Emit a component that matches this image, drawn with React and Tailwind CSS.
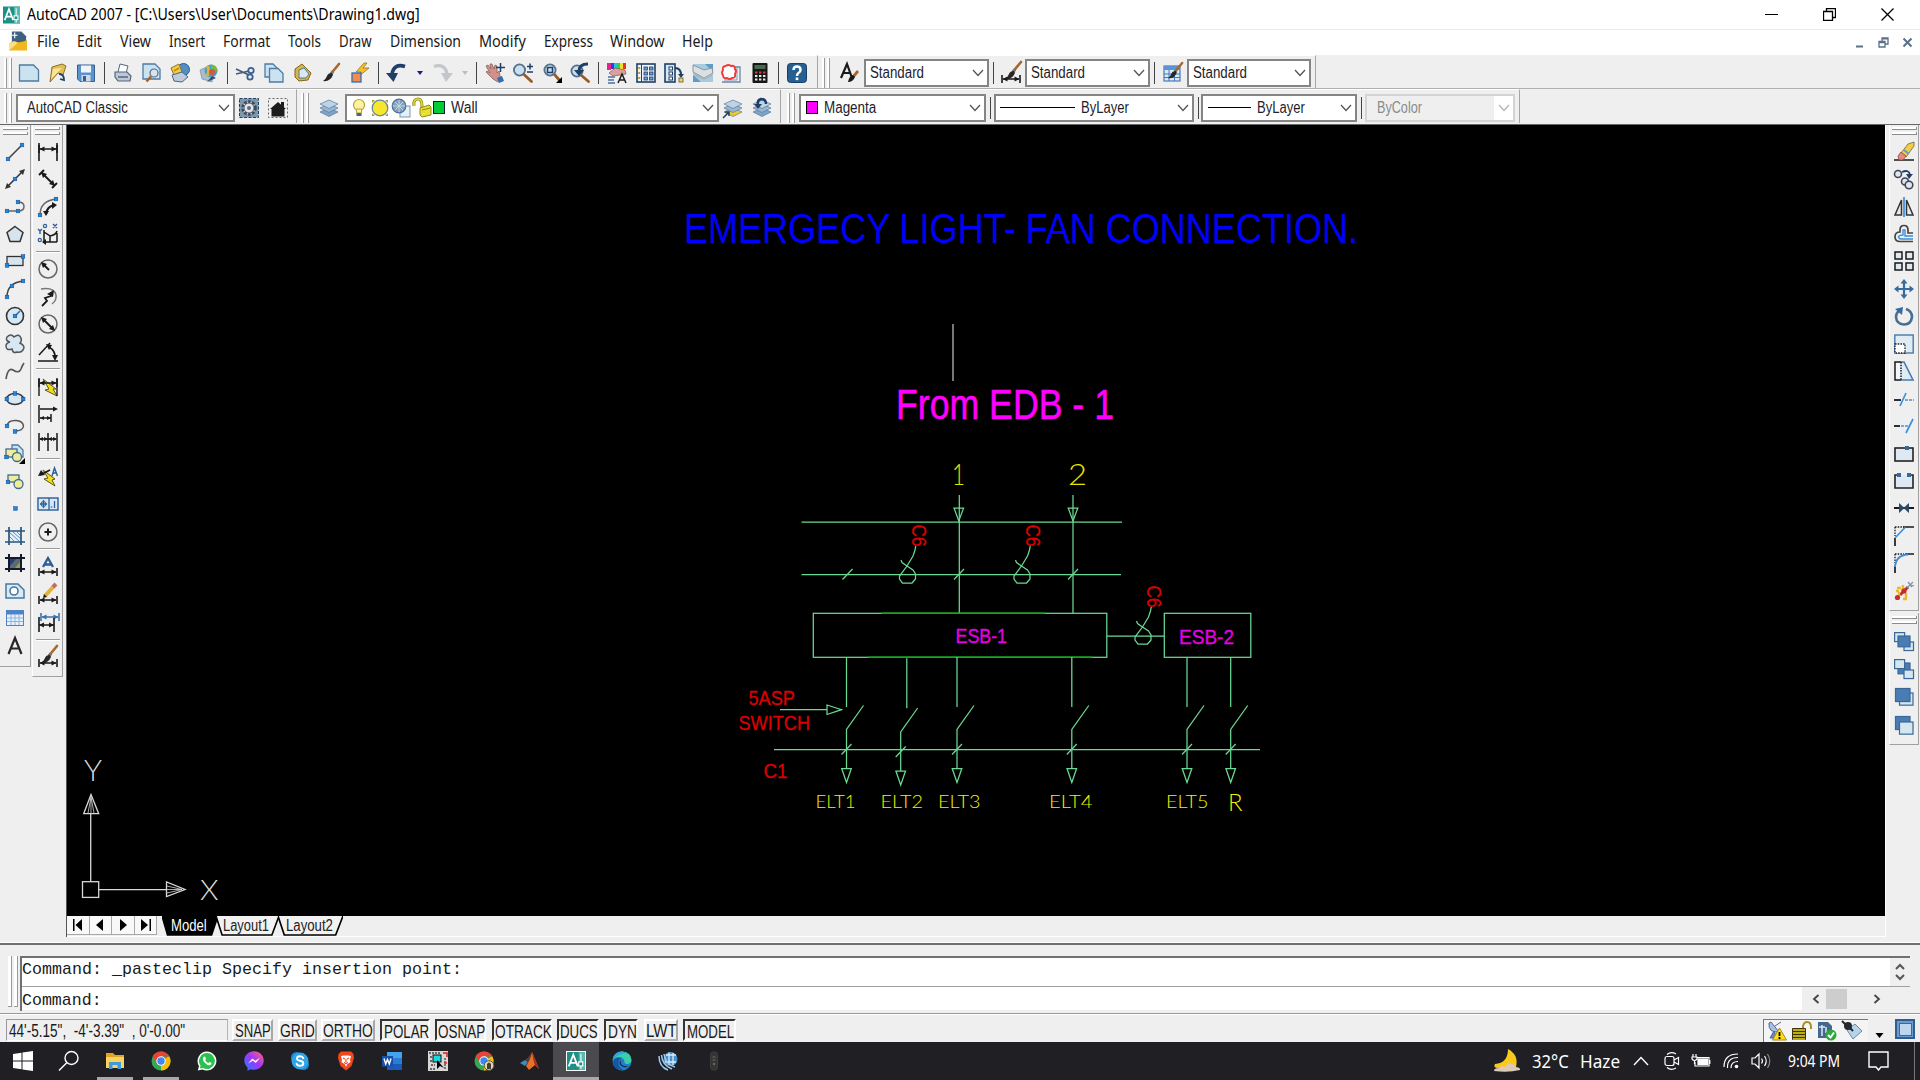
import React, { useLayoutEffect, useRef, useState } from "react";
import { FaWhatsapp } from "react-icons/fa";

/* Text squeezed or stretched horizontally to the width of its box. */
function Fit({ className = "", children }) {
  const box = useRef(null);
  const inner = useRef(null);
  const [k, setK] = useState(1);
  useLayoutEffect(() => {
    const w = inner.current.offsetWidth;
    if (w) setK(box.current.clientWidth / w);
  }, [children]);
  return (
    <span ref={box} className={"block shrink-0 whitespace-nowrap " + className}>
      <span ref={inner} className="inline-block origin-left whitespace-pre" style={{ transform: `scaleX(${k})` }}>
        {children}
      </span>
    </span>
  );
}

const Ico = ({ children, className = "" }) => (
  <svg viewBox="0 0 20 20" className={"block h-5 w-5 shrink-0 overflow-visible " + className} fill="none">
    {children}
  </svg>
);

const NAVY = "#1f3f66";
const BLUE = "#2f6fb5";
const K = "#1a1a1a";
const Dot = ({ x, y }) => <rect x={x - 1.8} y={y - 1.8} width="3.6" height="3.6" fill="#1f86e0" stroke="#0f4f94" strokeWidth=".5" />;
const Brush = ({ dx = 0, dy = 0 }) => (
  <g transform={`translate(${dx} ${dy})`}>
    <path d="M18 1 L10.5 10" stroke="#a8672f" strokeWidth="2.6" strokeLinecap="round" />
    <path d="M12 8.500 L10 11" stroke="#777" strokeWidth="3" />
    <path d="M10.800 10 Q7 10 6 13 Q5 16 2 18 Q9 19 12 12 Z" fill="#262626" />
  </g>
);
const Lens = ({ x = 8, y = 7, r = 5.6 }) => (
  <g>
    <path d={`M${x + r * 0.75} ${y + r * 0.75} L18.5 18.5`} stroke="#9a5a22" strokeWidth="2.8" strokeLinecap="round" />
    <circle cx={x} cy={y} r={r} fill="#c9dfee" stroke="#54708c" strokeWidth="1.8" />
  </g>
);
const Sheet = ({ x = 1, y = 2, w = 15, h = 16 }) => (
  <path d={`M${x} ${y} h${w - 5} l5 5 v${h - 5} h${-w} Z`} fill="#cbe2f1" stroke="#4d7ba3" strokeWidth="1.3" />
);
const Layers = ({ last = "#7fa3c8" }) => (
  <g stroke="#58789c" strokeWidth=".7">
    <path d="M1 14 L10 10 L19 14 L10 18.500 Z" fill={last} />
    <path d="M1 10 L10 6 L19 10 L10 14.500 Z" fill="#97b7d3" />
    <path d="M1 6 L10 2 L19 6 L10 10.500 Z" fill="#bdd3e6" />
  </g>
);
const Dim = ({ y = 16, c = K }) => (
  <g stroke={c} fill={c}>
    <path d={`M1 ${y - 4} V${y + 4} M19 ${y - 4} V${y + 4} M2 ${y} H18`} strokeWidth="1.6" />
    <path d={`M1.5 ${y} l5 -2.6 v5.2 Z M18.5 ${y} l-5 -2.6 v5.2 Z`} stroke="none" />
  </g>
);

const i = {
  newf: <Ico><Sheet x={0.5} y={2} w={19} h={16} /></Ico>,
  open: <Ico><path d="M4 4 L14 1 L18 3 L15 12 L10 10 L2 19 Z" fill="#e0bf55" stroke="#8c7026" /><path d="M5 6 L14 5 L3 16 Z" fill="#f7e59c" /><path d="M11 11 q5 0 5 6 l-4 -1" stroke={NAVY} strokeWidth="1.800" /></Ico>,
  save: <Ico><path d="M1.500 2 H18.500 V18.500 H4 L1.500 16 Z" fill="#5c93cc" stroke="#335f94" /><rect x="5" y="2.500" width="10" height="7" fill="#f0f4f8" /><rect x="5.500" y="12" width="9" height="6.500" fill="#d0dae4" /><rect x="7" y="13" width="3" height="5" fill="#335f94" /></Ico>,
  print: <Ico><path d="M5 9 L7 1 L15 3 L13 10" fill="#fff" stroke="#55657c" /><path d="M2 9 L14 9 L18 13 L17 18 L5 18 L2 14 Z" fill="#bcc8da" stroke="#55657c" strokeWidth="1.200" /><path d="M5 14 h10" stroke="#55657c" strokeWidth="1.500" /></Ico>,
  preview: <Ico><Sheet x={1} y={1} w={17} h={15} /><circle cx="12" cy="10" r="4" fill="#cfe6f5" stroke="#667" strokeWidth="1.200" /><path d="M9 13.500 L4.500 18.500" stroke="#a8602a" strokeWidth="2.600" /></Ico>,
  publish: <Ico><circle cx="13.500" cy="6.500" r="6" fill="#4f8fc6" stroke="#2c5a86" /><path d="M1 5 L9 1 L12 9 L4 12 Z" fill="#f1cf45" stroke="#8c7026" /><path d="M2 12 L12 9 L18 14 L12 19 L4 18 Z" fill="#becbdd" stroke="#55657c" /><path d="M4 8 L9 5" stroke="#c48a14" strokeWidth="2" /></Ico>,
  dwf: <Ico><path d="M1 7 L10 3 L14 8 L13 19 L3 16 Z" fill="#a8bdd2" stroke="#697f96" strokeWidth=".6" /><circle cx="12" cy="8" r="6.500" fill="#39a5c9" /><path d="M12 1.500 A6.500 6.500 0 0 1 18.500 8 L12 8 Z" fill="#74bb3d" /><path d="M8 3 Q11 7 8 13" stroke="#d9b53d" strokeWidth="3" /><circle cx="13" cy="9" r="3" fill="#d9534a" /><path d="M8 19 l9 -4 -4 -2 Z" fill="#36506d" /></Ico>,
  cut: <Ico><path d="M1 6 L14 12 M1 11 L14 8" stroke="#465b7a" strokeWidth="1.700" /><circle cx="16" cy="7.500" r="2.700" stroke="#3d5f92" strokeWidth="1.800" /><circle cx="15" cy="14" r="2.700" stroke="#3d5f92" strokeWidth="1.800" /></Ico>,
  copy: <Ico><Sheet x={1} y={1} w={13} h={13} /><Sheet x={5.500} y={5.500} w={13.500} h={13.500} /></Ico>,
  paste: <Ico><path d="M2 6 L9 1 L18 10 L15 17 L6 18 L2 14 Z" fill="#d9b544" stroke="#80661f" /><path d="M6 7 L11 5 L16 11 L13 15 L6 15 Z" fill="#d8e9f5" stroke="#4d7ba3" /></Ico>,
  brush: <Ico><Brush /></Ico>,
  match: <Ico><path d="M14 0 L6 9 H11 L8 14 L19 5 H13 L17 0 Z" fill="#f5c22c" stroke="#97702c" strokeWidth=".8" /><rect x="2" y="10" width="9" height="9" fill="#f58a4e" stroke={BLUE} strokeWidth="1.300" /></Ico>,
  undo: <Ico><path d="M19 3.500 Q8 0 6 11" stroke={NAVY} strokeWidth="3.600" /><path d="M0 10 L7.500 19 L12 10 Z" fill={NAVY} /></Ico>,
  redo: <Ico><path d="M1 3.500 Q12 0 14 11" stroke="#c3c6ca" strokeWidth="3.400" /><path d="M8 10 L13 19 L20 10 Z" fill="#c3c6ca" /></Ico>,
  pan: <Ico><path d="M1 3 L3 2 L6 6 L5 1 L7 1 L9 6 L10 2 L12 3 L12 10 L14 8 L15 13 L17 17 L13 19 L8 16 L1 9 L2 8 L5 10 Z" fill="#cf918b" stroke="#8d5f5c" strokeWidth=".8" /><path d="M12 15 l5 -2 2 5 -5 2 Z" fill={BLUE} /><path d="M15.500 0 V9 M11 4.500 H20" stroke={NAVY} strokeWidth="1.500" /></Ico>,
  zoomrt: <Ico><Lens x={6.500} /><path d="M14 3.500 h6 M17 .5 v6 M14 9 h6" stroke={NAVY} strokeWidth="1.500" /></Ico>,
  zoomwin: <Ico><Lens /><rect x="5.500" y="4.500" width="5" height="5" stroke={NAVY} strokeWidth="1.500" /><path d="M20 14 v6 h-6 Z" fill="#000" /></Ico>,
  zoomprev: <Ico><Lens x={7} y={8} /><path d="M18 1 Q9 1 9 8" stroke={NAVY} strokeWidth="3" /><path d="M4 7 h10 l-5 6 Z" fill={NAVY} /></Ico>,
  props: <Ico><rect x="0" y="0" width="4" height="7" fill="#e2258b" /><rect x="4" y="0" width="3" height="6" fill="#3a37e0" /><rect x="7" y="0" width="3" height="6" fill="#24c5d8" /><rect x="10" y="0" width="3" height="6" fill="#3bce3b" /><rect x="13" y="0" width="3" height="6" fill="#f0e22c" /><rect x="16" y="0" width="3" height="6" fill="#e63329" /><path d="M2 10 L8 5 L18 7 L19 11 L13 12 L6 13 Z" fill="#d9a199" stroke="#855" strokeWidth=".7" /><path d="M1 14 h7 M1 17 h6 M1 20 h7" stroke="#4c6f9c" strokeWidth="1.400" /><path d="M11 20 L15 11 L19 20 M13 17 h5" stroke={K} strokeWidth="1.500" /></Ico>,
  dcenter: <Ico><rect x="1" y="1" width="18" height="18" fill="#eef4fa" stroke={NAVY} strokeWidth="1.600" /><path d="M5.500 1 V19" stroke={NAVY} />{[4, 9, 14].map((y) => <g key={y}><rect x="2.200" y={y} width="2" height="2" fill="#c99a22" /><rect x="8" y={y} width="3.500" height="3" fill="#6e9ccc" stroke={NAVY} strokeWidth=".8" /><rect x="13.500" y={y} width="3.500" height="3" fill="#6e9ccc" stroke={NAVY} strokeWidth=".8" /></g>)}</Ico>,
  palettes: <Ico><rect x="1" y="1" width="10" height="18" fill="#d9e7f3" stroke={NAVY} strokeWidth="1.600" />{[4, 9, 14].map((y) => <rect key={y} x="5" y={y} width="3.500" height="3" fill="#fff" stroke={NAVY} />)}<path d="M11 5 Q17 5 17 12" stroke={NAVY} strokeWidth="2" /><path d="M14 11 h6 l-3 4 Z" fill={NAVY} /><rect x="15" y="15" width="4" height="4" fill="#f3d44b" stroke="#775" /></Ico>,
  sheetset: <Ico><rect x="0" y="1" width="20" height="18" fill="#a9cbe0" /><path d="M12 1 H20 V9 Z M0 12 L8 19 H0 Z" fill="#5f9cc4" /><path d="M0 2 L11 7 L19 5 L20 10 L11 15 L0 9 Z" fill="#dbe0e2" stroke="#8697a3" /><path d="M2 12 L11 16 L19 12" stroke="#a9b8c0" strokeWidth="2" /></Ico>,
  markup: <Ico><path d="M4 4 H19 V19 H1" stroke="#6f87a6" strokeWidth="1.300" /><path d="M3 17 h13 v-13" stroke="#8299b6" /><path d="M5 3 q-4 0 -3 4 q-2 3 0 5 q0 4 4 3 q3 2 5 0 q4 0 3 -4 q2 -3 0 -5 q0 -4 -4 -3 q-3 -2 -5 0" fill="#fff" stroke="#ee3a3a" strokeWidth="1.900" /></Ico>,
  calc: <Ico><rect x="2.500" y="0" width="15" height="20" rx="1" fill="#171717" /><rect x="4.500" y="2" width="11" height="4" fill="#456a4d" />{[8.5, 12, 15.5].map((y) => [5, 9, 13].map((x) => <rect key={x + "-" + y} x={x} y={y} width="2.400" height="2" fill={y === 8.5 ? "#e33b3b" : "#e8e8e8"} />))}</Ico>,
  help: <Ico><rect x=".5" y=".5" width="19" height="19" rx="3" fill="#276090" stroke="#163f6b" /><path d="M6.500 7 Q6.500 3.500 10 3.500 Q13.500 3.500 13.500 6.800 Q13.500 9 11.500 10 Q10 11 10 13" stroke="#fff" strokeWidth="2.500" /><rect x="8.700" y="14.500" width="2.600" height="2.600" fill="#fff" /></Ico>,
  tstyle: <Ico><path d="M2 15 L8 1 L13 15 M4 10 H11" stroke={K} strokeWidth="2.200" /><path d="M19 8 L14 14" stroke="#a8672f" strokeWidth="2.800" /><path d="M14 12 Q10 13 9 19 Q14 19 16 14 Z" fill={K} /></Ico>,
  dstyle: <Ico><g transform="translate(2 -2)"><Brush /></g><Dim y={16} /></Ico>,
  tabstyle: <Ico><rect x="1" y="3" width="16" height="15" fill="#dbe9f7" stroke="#4679b9" strokeWidth="1.200" /><rect x="1" y="3" width="16" height="4" fill="#5a93d6" /><path d="M1 11 h16 M1 14.500 h16 M6 7 v11 M11.500 7 v11" stroke="#4679b9" /><g transform="translate(3 -1) scale(.9)"><Brush /></g></Ico>,
  gear: <Ico><rect x=".5" y=".5" width="19" height="19" fill="#7d97ad" stroke={NAVY} strokeDasharray="3 1.500" /><circle cx="10" cy="10" r="6.300" fill="#e6e9ec" stroke="#3c4c5c" strokeWidth="3" strokeDasharray="2.600 1.400" /><circle cx="10" cy="10" r="5" fill="#e3e7eb" stroke="#556" /><circle cx="10" cy="10" r="2" fill="#5a6c80" /></Ico>,
  home: <Ico><rect x=".5" y=".5" width="19" height="19" stroke="#666" strokeDasharray="2 2" /><path d="M2 11 L10 4 L18 11 H16.500 V18.500 H3.500 V11 Z M13 4 h3 v5 h-3 Z" fill="#1c1c1c" /></Ico>,
  layers: <Ico><Layers /></Ico>,
  bulb: <Ico><circle cx="10" cy="7" r="5.500" fill="#fbf3a2" stroke="#b9a13a" strokeWidth="1.200" /><path d="M7.500 11 h5 v4 h-5 Z" fill="#fbf3a2" stroke="#b9a13a" /><path d="M7.500 15 h5 v3 h-5 Z" fill="#4f6480" /></Ico>,
  sun: <Ico><path d="M2 2 H5 L2 5 Z M18 2 V5 L15 2 Z M2 18 V15 L5 18 Z M18 18 H15 L18 15 Z" fill="#a5a032" /><circle cx="10" cy="10" r="7.800" fill="#f6e62c" stroke="#6f86a0" strokeWidth="1.300" /></Ico>,
  freeze: <Ico><rect x="9" y="8" width="10" height="11" fill="#e6eef6" stroke="#7a96b6" /><circle cx="8" cy="8" r="6.800" fill="#7fa1bd" stroke="#4d7399" strokeWidth="1.200" /><path d="M8 2 V14 M2 8 H14 M4 4 L12 12 M12 4 L4 12" stroke="#c9d8e3" /></Ico>,
  lock: <Ico><path d="M2 8 Q1 1 6 1 Q10 1 10 8 V10" stroke="#8f8a18" strokeWidth="3" /><path d="M2 8 Q1 1 6 1 Q10 1 10 8 V10" stroke="#e6dc3b" strokeWidth="1.400" /><path d="M8 10 L17 7 L19 9 V17 L10 19 L8 17 Z" fill="#e9df35" stroke="#8f8a18" /><path d="M10 12 L18 10" stroke="#8f8a18" /></Ico>,
  laymake: <Ico><Layers last="#eccb2c" /><path d="M0 20 L6 14 M2 14 h4 v4" stroke={NAVY} strokeWidth="1.500" /></Ico>,
  layprev: <Ico><Layers /><path d="M14 6 Q14 1 9 1 Q5 2 6 7" stroke={NAVY} strokeWidth="2.500" /><path d="M2 6 h8 l-4 5 Z" fill={NAVY} /></Ico>,
};

const draw = [
  <Ico><path d="M3 17 L17 3" stroke="#444" strokeWidth="1.600" /><Dot x={3} y={17} /><Dot x={17} y={3} /></Ico>,
  <Ico><path d="M2 18 L18 2" stroke="#333" strokeWidth="1.600" /><path d="M20 0 l-6 2 4 4 Z M0 20 l6 -2 -4 -4 Z" fill="#333" /><Dot x={10} y={10} /></Ico>,
  <Ico><path d="M2 14 H13 M13 5 Q19 5 19 9.500 Q19 14 13 14" stroke="#666" strokeWidth="1.500" /><Dot x={2} y={14} /><Dot x={13} y={14} /><Dot x={13} y={5} /></Ico>,
  <Ico><path d="M10 2.500 L18 8.500 L15 17.500 H5 L2 8.500 Z" fill="#d7e4ed" stroke="#333" strokeWidth="1.500" /></Ico>,
  <Ico><rect x="2" y="5.500" width="16" height="9" fill="#d7e4ed" stroke="#333" strokeWidth="1.300" /><Dot x={2} y={14.5} /><Dot x={18} y={5.5} /></Ico>,
  <Ico><path d="M2 18 Q2 4 18 2" stroke="#444" strokeWidth="1.500" /><Dot x={2} y={18} /><Dot x={7} y={7} /><Dot x={18} y={2} /></Ico>,
  <Ico><circle cx="10" cy="10" r="8.500" fill="#d7e8f4" stroke="#333" strokeWidth="1.600" /><path d="M10 10 L15 5" stroke={BLUE} strokeWidth="1.600" /><Dot x={10} y={10} /></Ico>,
  <Ico><path d="M5 8 Q0 7 2 3 Q6 -1 9 3 Q14 -1 16 4 Q17 7 15 9 Q21 12 18 16 Q16 19 12 18 Q8 20 7 15 Q1 17 1 12 Q1 9 5 8" fill="#d7e8f4" stroke="#555" strokeWidth="1.500" /></Ico>,
  <Ico><path d="M1 18 Q3 6 8 9 Q14 13 16 8 Q17 5 19 2" stroke="#555" strokeWidth="1.600" /></Ico>,
  <Ico><ellipse cx="10" cy="10" rx="8.500" ry="5.500" fill="#d7e8f4" stroke="#333" strokeWidth="1.500" /><Dot x={1.8} y={10} /><Dot x={18.2} y={10} /><Dot x={10} y={4.5} /></Ico>,
  <Ico><path d="M2 10 Q3 4 11 4.500 Q18 5 18.500 10 Q18 15 10 15" stroke="#555" strokeWidth="1.500" /><Dot x={2} y={10} /><Dot x={10} y={15.5} /></Ico>,
  <Ico><Sheet x={7} y={1} w={11} h={12} /><rect x="1" y="5" width="11" height="8" fill="#f1ec9c" stroke="#3f6b8d" strokeWidth="1.300" /><circle cx="12" cy="13" r="4.500" fill="#f1ec9c" stroke="#3f6b8d" strokeWidth="1.300" /><Dot x={1.5} y={13} /><path d="M20 14 v6 h-6 Z" fill="#000" /></Ico>,
  <Ico><rect x="3" y="4" width="11" height="7" fill="#f1ec9c" stroke="#3f6b8d" strokeWidth="1.300" /><circle cx="13.500" cy="13" r="4.500" fill="#f1ec9c" stroke="#3f6b8d" strokeWidth="1.300" /><Dot x={3} y={11} /></Ico>,
  <Ico><Dot x={10.5} y={10.5} /></Ico>,
  <Ico><path d="M4 6 H16 V15 H4 Z" fill="#e7f1fa" /><path d="M4 6 L14 15 M8 6 L16 13 M12 6 L16 10 M4 10 L9 15" stroke="#5d90c0" /><path d="M4 1 V19 M16 1 V19 M0 5 H20 M0 16 H20" stroke="#28567f" strokeWidth="1.700" /></Ico>,
  <Ico><path d="M4 5 H16 V16 H4 Z" fill="#5d6a70" /><path d="M4 5 H12 L4 14 Z" fill="#27406f" /><path d="M16 8 V16 H9 Z" fill="#9a9860" /><path d="M4 1 V19 M16 1 V19 M0 5 H20 M0 16 H20" stroke="#111b2b" strokeWidth="2" /></Ico>,
  <Ico><path d="M1 3 H13 L19 9 V17 H1 Z" fill="#d9eaf5" stroke="#4679a3" strokeWidth="1.500" /><circle cx="9" cy="10" r="4" fill="#fff" stroke="#4679a3" strokeWidth="1.600" /></Ico>,
  <Ico><rect x="1.500" y="2.500" width="17" height="15" fill="#e8f1fa" stroke="#4f83c4" /><rect x="1.500" y="2.500" width="17" height="4" fill="#4f83c4" /><path d="M2 10 h16 M2 13.500 h16 M6 6 v11 M10 6 v11 M14 6 v11" stroke="#8db3de" /></Ico>,
  <Ico><path d="M3.500 18 L10 2 L16.500 18 M6 12.500 H14" stroke="#262626" strokeWidth="2.200" /></Ico>,
];

const Sep = "sep";
const dims = [
  <Ico><Dim y={7} /><path d="M1 1 V19 M19 1 V19" stroke={K} strokeWidth="1.600" /></Ico>,
  <Ico><path d="M4 4 L16 16 M1 6 L6 1 M14 19 L19 14" stroke={K} strokeWidth="1.900" /><path d="M3 3 l6 2 -4 4 Z M17 17 l-6 -2 4 -4 Z" fill={K} /></Ico>,
  <Ico><path d="M2 18 Q2 4 18 2" stroke="#666" strokeWidth="1.400" /><path d="M8 17 Q9 9 17 8" stroke={K} strokeWidth="2.200" /><path d="M5 14 h6 l-3 5 Z M14 5 l5 3 -5 4 Z" fill={K} /><Dot x={2} y={18} /><Dot x={18} y={2} /></Ico>,
  <Ico><path d="M6 6 V18 H19 M6 8 L12 12 V18 M12 12 Q18 11 19 7 M19 9 V18" stroke={K} strokeWidth="1.500" /><path d="M4 18 l4 -3 v6 Z" fill={K} /><path d="M0 5 l2 2 2 -2 M2 7 v3 M15 0 l4 4 M19 0 l-4 4" stroke="#2b5d98" strokeWidth="1.400" /><circle cx="7" cy="2" r="1.600" stroke="#2b5d98" strokeWidth="1.200" /><circle cx="1.800" cy="16" r="1.600" stroke="#2b5d98" strokeWidth="1.200" /></Ico>,
  Sep,
  <Ico><circle cx="10" cy="10" r="9" stroke="#666" strokeWidth="1.500" /><path d="M11 11 L5 5" stroke={K} strokeWidth="2" /><path d="M3 3 l6 2 -4 4 Z" fill={K} /></Ico>,
  <Ico><path d="M3 2 Q16 0 18 8 Q19 13 14 17" stroke="#777" strokeWidth="1.500" /><path d="M4 19 L9 14 L7 11 L13 9 L12 6" stroke={K} strokeWidth="1.800" /><path d="M16 3 l-1 7 -6 -3 Z" fill={K} /></Ico>,
  <Ico><circle cx="10" cy="10" r="9" stroke="#666" strokeWidth="1.500" /><path d="M5 5 L15 15" stroke={K} strokeWidth="2" /><path d="M3 3 l6 2 -4 4 Z M17 17 l-6 -2 4 -4 Z" fill={K} /></Ico>,
  <Ico><path d="M0 19 H20 M1 13 L12 1" stroke={K} strokeWidth="1.500" /><path d="M11 5 Q18 9 17 17" stroke={K} strokeWidth="1.600" /><path d="M8 2 l6 1 -3 5 Z M14 13 h6 l-3 6 Z" fill={K} /></Ico>,
  Sep,
  <Ico><path d="M5 2 L18 12 L15 12 L19 19 L7 13 L11 12 Z" fill="#f0dc1f" stroke="#5c5714" strokeWidth="1" /><Dim y={6} /><path d="M1 1 V19 M19 1 V19" stroke={K} strokeWidth="1.400" /></Ico>,
  <Ico><path d="M1 1 V19 M2 5 H18 M2 14 H13 M13 10 V18" stroke={K} strokeWidth="1.500" /><path d="M20 5 l-5 -2.500 v5 Z M2 14 l4 -2 v4 Z M13 14 l-4 -2 v4 Z" fill={K} /></Ico>,
  <Ico><path d="M1 1 V19 M10 1 V19 M19 1 V19 M2 7 H18" stroke={K} strokeWidth="1.500" /><path d="M1 7 l4 -2 v4 Z M10 7 l-4 -2 v4 Z M10 7 l4 -2 v4 Z M19 7 l-4 -2 v4 Z" fill={K} /></Ico>,
  Sep,
  <Ico><path d="M5 3 L17 12 L14 13 L17 19 L6 12 L10 11 Z" fill="#f0dc1f" stroke="#5c5714" strokeWidth="1" /><path d="M2 8 L12 3" stroke={K} strokeWidth="1.800" /><path d="M0 9 l3 -6 4 5 Z" fill={K} /><path d="M14 9 L16.500 1 L19.500 9 M15 6 h4" stroke="#2b5d98" strokeWidth="1.400" /></Ico>,
  <Ico><rect x="0" y="4" width="20" height="12" fill="#d7e8f4" stroke="#2b5d98" strokeWidth="1.400" /><path d="M11 4 V16 M2 10 h7 M5.500 6 v8 M16.500 7 v7" stroke="#2b5d98" strokeWidth="1.300" /><circle cx="5.500" cy="10" r="2.500" stroke="#2b5d98" /><circle cx="13.500" cy="13" r=".8" fill="#2b5d98" /></Ico>,
  <Ico><circle cx="10" cy="10" r="9" stroke="#666" strokeWidth="1.500" /><path d="M6.500 10 H13.500 M10 6.500 V13.500" stroke={K} strokeWidth="2" /></Ico>,
  Sep,
  <Ico><path d="M5 10 L10 1 L15 10 M6.500 7.500 H13.500" stroke="#2b5d98" strokeWidth="2.300" /><Dim y={15} /></Ico>,
  <Ico><Dim y={16} /><path d="M7 12 L16 2" stroke="#e2b13a" strokeWidth="4" /><path d="M15 3 L18 0" stroke="#c46a6a" strokeWidth="4" /><path d="M5 14 l1 -4 3 3 Z" fill={K} /></Ico>,
  <Ico><g transform="translate(2 0)"><Dim y={5} c="#3a72ad" /></g><path d="M1 5 V20 M16 6 V20 M1 13 H16" stroke={K} strokeWidth="1.600" /><path d="M1 13 l5 -2.600 v5.200 Z M16 13 l-5 -2.600 v5.200 Z" fill={K} /></Ico>,
  Sep,
  <Ico><g transform="translate(1 -2)"><Brush /></g><Dim y={16} /></Ico>,
];

const SQ = ({ x, y, w = 7, h = 7, f = "#dce9f3" }) => <rect x={x} y={y} width={w} height={h} fill={f} stroke={K} strokeWidth="1.500" />;
const modify = [
  <Ico><path d="M0 18 H20" stroke={K} strokeWidth="1.500" /><path d="M7 11 L14 2 L20 0 V4 L12 15 Z" fill="#efce4e" stroke="#7a6420" strokeWidth=".8" /><path d="M10 8 L15 12" stroke="#6b9cc9" strokeWidth="2" /><path d="M4 14 L7 10 L12 14 L9 18 H5 Z" fill="#e68a80" stroke="#844" strokeWidth=".8" /></Ico>,
  <Ico><circle cx="4" cy="5" r="3.500" fill="#dce9f3" stroke="#445" strokeWidth="1.600" /><circle cx="11" cy="12.500" r="3.500" fill="#dce9f3" stroke="#445" strokeWidth="1.600" /><circle cx="15" cy="16" r="3.800" fill="#dce9f3" stroke="#445" strokeWidth="1.600" /><path d="M8 3 Q15 0 16 6" stroke={NAVY} strokeWidth="1.800" /><path d="M12 5 h7 l-4 5 Z" fill={NAVY} /></Ico>,
  <Ico><path d="M7.500 3 V18 H1 Z M12.500 3 V18 H19 Z" fill="#e4ebf0" stroke="#333" strokeWidth="1.500" /><path d="M10 0 V20" stroke="#3c8fdd" strokeWidth="1.700" /></Ico>,
  <Ico><path d="M19 9 H14 V6 Q14 1.500 10 1.500 Q6 1.500 6 6 V8 Q1 8 1 13 Q1 17.500 6 17.500 H19" stroke="#444" strokeWidth="1.700" /><path d="M19 12 H11 V6 H9 V11 Q5 11 4.500 13 Q5 15 7 15 H19" stroke="#3c8fdd" strokeWidth="1.400" /></Ico>,
  <Ico><SQ x={1} y={1} /><SQ x={12} y={1} /><SQ x={1} y={12} /><SQ x={12} y={12} /></Ico>,
  <Ico><path d="M10 2 V18 M2 10 H18" stroke="#366b9f" strokeWidth="2.200" /><path d="M10 0 l3.500 4.500 h-7 Z M10 20 l3.500 -4.500 h-7 Z M0 10 l4.500 -3.500 v7 Z M20 10 l-4.500 -3.500 v7 Z" fill="#366b9f" /></Ico>,
  <Ico><path d="M12 3 Q18 5 18 11 Q17 18.500 10 18.500 Q2.500 18 2 11 Q2 7 5 5" stroke="#476f96" strokeWidth="2.600" /><path d="M1 3 L9 1 L8 9 Z" fill="#366b9f" /></Ico>,
  <Ico><rect x=".8" y="1" width="18.400" height="18" fill="#dfebf5" stroke="#4879a8" strokeWidth="1.400" /><rect x="1" y="10" width="10" height="9" fill="#fff" stroke={K} strokeWidth="1.300" strokeDasharray="1.500 1.200" /></Ico>,
  <Ico><path d="M7 1 H10 L19 19 H7" fill="#dfebf5" stroke="#4879a8" strokeWidth="1.600" /><path d="M7 1 H1 V19 H7" fill="#f2f6f9" stroke={K} strokeWidth="1.500" /><path d="M7 1 V19" stroke={K} strokeWidth="1.500" strokeDasharray="1.500 1.200" /></Ico>,
  <Ico><path d="M0 11 H7" stroke={K} strokeWidth="1.800" /><path d="M11 11 H20" stroke="#4d93d6" strokeWidth="1.500" strokeDasharray="3 1" /><path d="M6 17 L12 4" stroke="#3c8fdd" strokeWidth="1.700" /></Ico>,
  <Ico><path d="M0 10 H6" stroke={K} strokeWidth="1.800" /><path d="M7 10 H15" stroke="#4d93d6" strokeWidth="1.500" strokeDasharray="3 1" /><path d="M12 17 L19 3" stroke="#3c8fdd" strokeWidth="1.700" /></Ico>,
  <Ico><rect x="1" y="4" width="18" height="13" fill="#dfe9f3" stroke="#222" strokeWidth="1.600" /><rect x="11" y="2" width="4" height="4" fill="#366b9f" /></Ico>,
  <Ico><rect x="1" y="4" width="18" height="13" fill="#dfe9f3" /><path d="M5 4 H1 V17 H19 V4 H15" stroke="#222" strokeWidth="1.600" /><rect x="3" y="2" width="4" height="4" fill="#366b9f" /><rect x="13" y="2" width="4" height="4" fill="#366b9f" /></Ico>,
  <Ico><path d="M0 10 H20" stroke={K} strokeWidth="2" /><path d="M5 5 L10.500 10 L5 15 Z M15 5 L9.500 10 L15 15 Z" fill="#2c4864" /></Ico>,
  <Ico><path d="M1 1 H10 M1 1 V10" stroke={K} strokeWidth="1.300" strokeDasharray="1.500 1.200" /><path d="M9 1 H20 M1 12 V20" stroke={K} strokeWidth="1.700" /><path d="M1 12 L11 1.500" stroke="#3c8fdd" strokeWidth="1.700" /></Ico>,
  <Ico><path d="M1 1 H10 M1 1 V10" stroke={K} strokeWidth="1.300" strokeDasharray="1.500 1.200" /><path d="M11 1 H20 M1 13 V20" stroke={K} strokeWidth="1.700" /><path d="M1 14 Q2 2 14 1.500" stroke="#3c8fdd" strokeWidth="1.900" /></Ico>,
  <Ico><path d="M6 14 L14 6" stroke="#a33" strokeWidth="3" /><path d="M2 10 h3 M3 7 h4 M9 4 v4 M5 11 v4 M12 12 v5 M9 18 h4 M7 9 h3" stroke="#e8b92c" strokeWidth="2.400" /><circle cx="3.500" cy="16.500" r="2.600" fill="#cf2b22" /><circle cx="10" cy="10" r="2.600" fill="#cf2b22" /><path d="M13 7 L19 1 M14 1 l4 5 M17 4 l3 1" stroke="#7f95ab" strokeWidth="1.300" /></Ico>,
];
const back = "#4a7cb4";
const lite = "#d5e6ef";
const Bx = ({ x, y, s = 11, f }) => <rect x={x} y={y} width={s} height={s * 0.9} fill={f} stroke="#3a6796" strokeWidth="1.200" />;
const order = [
  <Ico><Bx x={0.6} y={0.6} s={10} f={lite} /><Bx x={10} y={10} s={9.5} f={lite} /><Bx x={4} y={4} s={12} f={back} /></Ico>,
  <Ico><Bx x={4} y={4} s={12} f={back} /><Bx x={0.6} y={0.6} s={10} f={lite} /><Bx x={10} y={11} s={9.5} f={lite} /></Ico>,
  <Ico><Bx x={5.5} y={6} s={13.5} f={lite} /><Bx x={1.5} y={1.5} s={14.5} f={back} /></Ico>,
  <Ico><Bx x={1.5} y={1.5} s={14.5} f={back} /><Bx x={5.5} y={7} s={13.5} f={lite} /></Ico>,
];

const Grip = () => (
  <span className="flex h-full w-[15px] shrink-0 items-center gap-[2px] pl-[4px]">
    <span className="h-[30px] w-[3px] border-r border-[#9a9a9a] bg-white" />
    <span className="h-[30px] w-[3px] border-r border-[#9a9a9a] bg-white" />
  </span>
);
const HGrip = () => (
  <span className="flex shrink-0 flex-col gap-[2px]">
    <span className="h-[3px] w-[25px] border-b border-r border-[#8c8c8c] bg-white" />
    <span className="h-[3px] w-[25px] border-b border-r border-[#8c8c8c] bg-white" />
  </span>
);
const VSep = () => (
  <span className="flex w-[8px] shrink-0 justify-center">
    <span className="h-[22px] w-px bg-[#444]" />
  </span>
);
const C = ({ children }) => <span className="flex w-[28.6px] shrink-0 justify-center">{children}</span>;
const Tri = ({ c }) => (
  <svg viewBox="0 0 6 4" className="h-[4px] w-[6px]"><path d="M0 0 H6 L3 4 Z" fill={c} /></svg>
);
const Combo = ({ className, off, children }) => (
  <span className={"flex h-[28px] shrink-0 items-center border-2 text-[16px] " + (off ? "border-[#d4d4d4] bg-[#efefef] text-[#8a8a8a] " : "border-[#858585] bg-white text-[#1d1d2b] ") + className}>
    {children}
    <span className={"ml-auto flex h-full items-center pr-[3px] " + (off ? "bg-white pl-[4px]" : "")}>
      <svg viewBox="0 0 12 8" className="h-[8px] w-[12px]" fill="none">
        <path d="M1 1 L6 6.500 L11 1" stroke={off ? "#b5b5b5" : "#555"} strokeWidth="1.300" />
      </svg>
    </span>
  </span>
);
const Bar = ({ className, children }) => (
  <div className={"flex h-full shrink-0 items-center border-r border-t border-r-[#a5a5a5] border-t-white " + className}>{children}</div>
);

const AcadLogo = ({ className }) => (
  <svg viewBox="0 0 20 20" className={className} fill="none">
    <rect width="20" height="20" fill="#1d8f86" />
    <path d="M13 0 H20 V20 H13 Z" fill="#56b9ae" />
    <path d="M2 16 L7 3 L12 16 M4 12 H10" stroke="#fff" strokeWidth="2" />
    <rect x="13" y="11" width="4.500" height="4.500" fill="#1d8f86" stroke="#fff" strokeWidth="1.300" />
    <path d="M15.500 2 V11 M15.500 15.500 V19" stroke="#fff" strokeWidth="1.200" />
  </svg>
);

const menu = [
  ["File", "w-[23px] mr-[17px]"], ["Edit", "w-[25px] mr-[18px]"], ["View", "w-[31px] mr-[18px]"],
  ["Insert", "w-[36px] mr-[18px]"], ["Format", "w-[47px] mr-[18px]"], ["Tools", "w-[33px] mr-[18px]"],
  ["Draw", "w-[33px] mr-[18px]"], ["Dimension", "w-[71px] mr-[18px]"], ["Modify", "w-[47px] mr-[18px]"],
  ["Express", "w-[49px] mr-[17px]"], ["Window", "w-[55px] mr-[17px]"], ["Help", "w-[31px]"],
];

/* ---- model space drawing ---- */
const LN = "#6ad992";
const TX = ({ x, y, w, s, f, children, cad, ...r }) => (
  <text x={x} y={y} fontSize={s} fill={f} textLength={w} lengthAdjust="spacingAndGlyphs" className={cad ? "font-['Lato'] font-light" : "font-['Liberation_Sans']"} {...r}>
    {children}
  </text>
);
const Down = ({ x, y, h = 14 }) => <path d={`M${x - 4.8} ${y} h9.600 L${x} ${y + h} Z`} />;
const Tick = ({ x, y }) => <path d={`M${x - 5} ${y + 5} L${x + 5} ${y - 5.500}`} />;
const Switch = ({ x, dy = 0, top = x }) => (
  <g>
    <path d={`M${top} ${657 + dy / 2} V${707 + dy / 2} M${x + 17} ${705.5 + dy} L${x} ${729.5 + dy} V${768.5 + dy}`} />
    <Down x={x} y={768.5 + dy} h={14} />
    <Tick x={x} y={749.5 + dy} />
  </g>
);
const Leader = ({ x, y }) => (
  <g transform={`translate(${x} ${y})`}>
    <path d="M8.700 -29 L8 -25 L6 -19 L0 -9 L-7.500 1 V4 L-4.500 8 H5 L8.500 4 V-1 L6 -5 L0 -9 L-5 -12.500 L-6 -15" />
    <text transform="translate(4.500 -50.500) rotate(90)" fontSize="21" fill="#dc0000" stroke="#dc0000" strokeWidth=".3" textLength="22" lengthAdjust="spacingAndGlyphs" className="font-['Liberation_Sans']">C6</text>
  </g>
);
const mag = { stroke: "#e600e6", strokeWidth: 0.3 };
const red = { stroke: "#dc0000", strokeWidth: 0.3 };
const Drawing = () => (
  <svg viewBox="67 125 1818 791" className="block h-[791px] w-[1818px]" fill="none">
    <TX x={684} y={242.5} w={674} s={43} f="#0000ff">EMERGECY LIGHT- FAN CONNECTION.</TX>
    <path d="M953 324 V381" stroke="#c8c8c8" strokeWidth="1.200" />
    <TX x={896} y={418.8} w={218} s={43} f="#ff00ff" stroke="#ff00ff" strokeWidth=".5">From EDB - 1</TX>
    <TX cad x={952} y={485} w={13} s={29} f="#e6e600">1</TX>
    <TX cad x={1068} y={485} w={19} s={29} f="#e6e600">2</TX>
    <g stroke={LN} strokeWidth="1.250">
      <path d="M801.500 522 H1122 M801.500 574.500 H1121 M959.300 495 V613 M1073 495 V613" />
      <Down x={958.8} y={508} h={13} />
      <Down x={1073} y={508} h={13} />
      <Tick x={847.5} y={574.5} />
      <Tick x={959} y={574.5} />
      <Tick x={1073} y={574.5} />
      <Leader x={907} y={575} />
      <Leader x={1021.500} y={575} />
      <Leader x={1142.500} y={636} />
      <rect x="813.300" y="613.300" width="293.500" height="44" />
      <rect x="1164.300" y="613.300" width="86.500" height="44" />
      <path d="M1107 636 H1164 M774 749.500 H1260 M780 709.500 H827" />
      <path d="M827 705 V714.500 L841.500 709.700 Z" />
      <path d="M881.500 613.300 H1045 M868.500 657.300 H1092.500" stroke="#00b800" strokeWidth="1.500" />
      <Switch x={846.5} />
      <Switch x={900.7} top={906.8} dy={2.5} />
      <Switch x={957} />
      <Switch x={1071.8} />
      <Switch x={1187} />
      <Switch x={1230.7} />
    </g>
    <TX x={955.500} y={643} w={51.500} s={21} f="#e600e6" {...mag}>ESB-1</TX>
    <TX x={1179} y={644} w={55} s={21} f="#e600e6" {...mag}>ESB-2</TX>
    <TX x={748.500} y={705.200} w={46.500} s={21} f="#dc0000" {...red}>5ASP</TX>
    <TX x={738.500} y={730} w={71.500} s={21} f="#dc0000" {...red}>SWITCH</TX>
    <TX x={763.500} y={777.500} w={24} s={21} f="#dc0000" {...red}>C1</TX>
    <TX cad x={815.500} y={808} w={40} s={17.500} f="#f0f000">ELT1</TX>
    <TX cad x={880.500} y={808} w={42.500} s={17.500} f="#f0f000">ELT2</TX>
    <TX cad x={938} y={808} w={42.500} s={17.500} f="#f0f000">ELT3</TX>
    <TX cad x={1049} y={808} w={43.500} s={17.500} f="#f0f000">ELT4</TX>
    <TX cad x={1166} y={808} w={42.500} s={17.500} f="#f0f000">ELT5</TX>
    <TX cad x={1228} y={811} w={14.500} s={23.500} f="#f0f000">R</TX>
    <g stroke="#d8d8d8" strokeWidth="1.300">
      <path d="M90.700 814 V881.500 M98.700 889.700 H166.500 M83.700 813.700 H98.700 L91 794.500 Z M166.500 882 V896.500 L185 889.500 Z" />
      <path d="M88 813 L91 797 L94 813 M91 813 V799 M167 886 L182 889.500 L167 893 M167 889.500 H182" strokeWidth=".8" />
      <rect x="82.500" y="881.700" width="16.200" height="15.700" />
    </g>
    <TX cad x={84} y={781} w={18} s={30} f="#d8d8d8">Y</TX>
    <TX cad x={200} y={900} w={18.500} s={28} f="#d8d8d8">X</TX>
  </svg>
);

const Nav = ({ d }) => (
  <span className="flex h-[19px] w-[22.500px] items-center justify-center border-b border-r border-[#a8a8a8] bg-[#f8f8f8]">
    <svg viewBox="0 0 12 12" className="h-[12px] w-[12px]" fill="#000">{d}</svg>
  </span>
);
const Tab = ({ on, className, w, children }) => (
  <span className={"relative flex h-[20px] shrink-0 items-center justify-center " + className}>
    <svg className="absolute inset-0 h-full w-full" viewBox="0 0 62 20" preserveAspectRatio="none">
      <path d="M0 0 L6 19 H55 L62 0 Z" fill={on ? "#000" : "#f2f2f2"} />
      <path d="M0 0 L6 19 H55 L62 0" fill="none" stroke="#000" strokeWidth="1.600" />
    </svg>
    <Fit className={"relative mr-[3px] text-[16px] leading-[20px] " + w + (on ? " text-white" : " text-[#222]")}>{children}</Fit>
  </span>
);

const status = [
  ["SNAP", 0, "w-[41px] mr-[5px]", "w-[36px]"], ["GRID", 0, "w-[39px] mr-[4px]", "w-[35px]"], ["ORTHO", 0, "w-[54px] mr-[5px]", "w-[50px]"],
  ["POLAR", 1, "w-[50px] mr-[5px]", "w-[45px]"], ["OSNAP", 1, "w-[51px] mr-[6px]", "w-[47px]"], ["OTRACK", 1, "w-[60px] mr-[5px]", "w-[57px]"],
  ["DUCS", 1, "w-[42px] mr-[5px]", "w-[38px]"], ["DYN", 1, "w-[34px] mr-[6px]", "w-[29px]"], ["LWT", 0, "w-[34px] mr-[5px]", "w-[31px]"],
  ["MODEL", 1, "w-[53px]", "w-[47px]"],
];

const Chrome = () => (
  <g>
    <circle cx="10" cy="10" r="9.500" fill="#34a853" />
    <path d="M10 10 L18.200 5.200 A9.500 9.500 0 0 1 10 19.500 Z" fill="#fbbc04" />
    <path d="M10 5.500 H18.400 L18.200 5.200 A9.500 9.500 0 0 0 1.800 5.200 L6 12 Z" fill="#ea4335" />
    <circle cx="10" cy="10" r="4.700" fill="#fff" />
    <circle cx="10" cy="10" r="3.700" fill="#4285f4" />
  </g>
);
const tasks = [
  [<Ico><path d="M0 3 L8.500 1.800 V9.400 H0 Z M9.500 1.600 L20 0 V9.400 H9.500 Z M0 10.400 H8.500 V18.200 L0 17 Z M9.500 10.400 H20 V20 L9.500 18.400 Z" fill="#fff" /></Ico>],
  [<Ico><circle cx="12.500" cy="7" r="6.500" stroke="#fff" strokeWidth="1.400" /><path d="M8 11.500 L0 19.500" stroke="#fff" strokeWidth="1.500" /></Ico>],
  [<Ico><path d="M1 2 H8 L10 4 H19 V17 H1 Z" fill="#e0a526" /><path d="M1 6 H19 V17 H1 Z" fill="#fbd45f" /><path d="M4 18 V11 H16 V18 H12.500 V14 H7.500 V18 Z" fill="#3f9ae0" /></Ico>, "w-[36px]"],
  [<Ico><Chrome /></Ico>, "w-[36px]"],
  [<Ico><path d="M10 .5 A9.500 9.500 0 1 1 5.500 18.400 L.8 19.500 L2 15 A9.500 9.500 0 0 1 10 .5" fill="#fff" /><path d="M10 2 A8 8 0 1 1 5.800 16.900 L2.800 17.600 L3.600 14.700 A8 8 0 0 1 10 2" fill="#2cc14e" /><path d="M6.500 6 Q7.500 5 8.200 6 L9 8 L8.200 9.200 Q9.300 11.200 11.300 12 L12.500 11 L14.500 12 Q14.800 13.500 13 14.300 Q10.500 14.800 7.500 11.500 Q5 8.300 6.500 6" fill="#fff" /></Ico>],
  [<svg viewBox="0 0 20 20" className="h-5 w-5"><defs><linearGradient id="msg" x1="0" y1="1" x2="1" y2="0"><stop offset="0" stopColor="#1488ff" /><stop offset=".5" stopColor="#a033ff" /><stop offset="1" stopColor="#ff6968" /></linearGradient></defs><path d="M10 .3 C4.500 .3 .3 4.300 .3 9.500 C.3 12.300 1.500 14.700 3.500 16.300 V19.700 L6.500 18.200 Q8 18.700 10 18.700 C15.500 18.700 19.700 14.700 19.700 9.500 C19.700 4.300 15.500 .3 10 .3" fill="url(#msg)" /><path d="M4 12.500 L8.300 7.500 L11.300 9.800 L16 6.800 L11.800 12 L8.800 9.700 Z" fill="#fff" /></svg>],
  [<Ico><circle cx="6.500" cy="6.500" r="5.500" fill="#1c86d1" /><circle cx="13.500" cy="13.500" r="5.500" fill="#1c86d1" /><circle cx="10" cy="10" r="8.500" fill="#2fa4e6" /><path d="M13.300 7.200 Q12.500 5.200 10 5.200 Q7 5.200 7 7.400 Q7 9.200 10 9.800 Q13.300 10.400 13.300 12.500 Q13.300 14.800 10 14.800 Q7.200 14.800 6.600 12.700" stroke="#fff" strokeWidth="1.900" strokeLinecap="round" /></Ico>],
  [<Ico><path d="M5 .5 H15 L17.500 3 L18 7 L15.500 15 L10 19.500 L4.500 15 L2 7 L2.500 3 Z" fill="#f2471c" /><path d="M5 5 L8 4.500 H12 L15 5 L14 9 L14.500 11 L11 13.500 L10 16 L9 13.500 L5.500 11 L6 9 Z" fill="#fff" /><path d="M7 7 l2 1 M13 7 l-2 1 M10 8 V11 M8 11.500 l2 1 2 -1" stroke="#f2471c" strokeWidth="1.200" /></Ico>],
  [<Ico><path d="M5 1 H20 V7 H5 Z" fill="#41a5ee" /><path d="M5 7 H20 V13 H5 Z" fill="#2b7cd3" /><path d="M5 13 H20 V19 H5 Z" fill="#185abd" /><rect x="0" y="5" width="11" height="10.500" fill="#1650a8" /><path d="M2 7.500 L3.700 13 L5.500 8.500 L7.300 13 L9 7.500" stroke="#fff" strokeWidth="1.400" /></Ico>],
  [<Ico><rect width="20" height="20" fill="#d7d7d7" /><path d="M1 2 H13 M2 18 H8 M2 6 H4 M2 10 H4 M17 7 V19 M3 14 H7" stroke="#444" strokeDasharray="2 1" strokeWidth="1.300" /><rect x="5" y="4" width="8" height="7" fill="#18d8e0" stroke="#111" /><path d="M9 9 V18 L12 15 L16 17 Z" fill="#000" /><path d="M15 2 h4 v4 M16 12 h3" stroke="#d22" strokeWidth="1.500" /></Ico>],
  [<Ico><Chrome /><circle cx="15" cy="14.500" r="4.800" fill="#dfd5b5" stroke="#554" /><path d="M13 18 V13 Q15 10 17 13 V18 Z" fill="#453c30" /></Ico>],
  [<Ico><path d="M0 12 L5 9 L8 11 L5 15 Z" fill="#3b8fbf" /><path d="M5 9 Q9 6 12 1 L9 12 L5 15 L8 11 Z" fill="#5a3a35" /><path d="M12 1 Q14 5 19 18 L15 14 L9 19 L6 15 Q10 10 12 1" fill="#e8702a" /><path d="M12 1 Q13 9 15 14 L19 18 Z" fill="#a02c17" /></Ico>],
  [<AcadLogo className="h-5 w-5 border border-white" />, "w-full", true],
  [<Ico><circle cx="10" cy="10" r="9.500" fill="#1b7fd0" /><path d="M.5 9 Q2 .5 10 .5 Q19 1 19.500 9 Q19 13 15 13 Q12 13 12.500 10 Q11 6 7 6 Q3 6 .5 9" fill="#3ccfa5" /><path d="M.5 9 Q2 .5 10 .5 Q13 .6 15 2 Q6 2 .5 9" fill="#2aa6e0" /><path d="M7 9 Q5 16 11 19 Q5 19.500 2 15 Q0 10 3 8 Q6 6 9 7.500 Z" fill="#1557a5" /><path d="M9 9 Q7 16 17 15.500 Q12 17 9.500 15 Q6 12 9 9" fill="#1f1f24" /></Ico>],
  [<Ico><circle cx="12.500" cy="8" r="7" fill="#4b92cc" /><path d="M8 4 H18 M7 11 H18 M11 1.500 V14 M15 2 V14" stroke="#d6ecfa" strokeWidth="1.300" /><path d="M1 5 Q1 16 10 19 M3.500 4 Q4 14 14 18 M6 3 Q7 13 17 16" stroke="#9ccbf0" strokeWidth="1.500" /></Ico>],
  [<Ico><rect x="6.500" y="1" width="7" height="18" rx="2.500" fill="#333436" stroke="#3d3d3d" /><path d="M8.500 6 h3 M8.500 9 h3" stroke="#59594f" strokeWidth="1.300" /><circle cx="10" cy="13" r="1.300" fill="#6d6a42" /></Ico>],
];

export default function App() {
  return (
    <div className="flex h-[1080px] w-[1920px] flex-col overflow-hidden bg-[#efefef] font-['Liberation_Sans',sans-serif] text-[#1a1a1a]">
      {/* title bar */}
      <header className="flex h-[29px] shrink-0 items-center bg-white pl-[3px] font-['Noto_Sans',sans-serif]">
        <AcadLogo className="h-[18px] w-[17px]" />
        <Fit className="ml-[7px] w-[393px] text-[16px] leading-[29px] text-black">AutoCAD 2007 - [C:\Users\User\Documents\Drawing1.dwg]</Fit>
        <span className="ml-auto flex items-center gap-[45px] pr-[26px] text-black">
          <svg viewBox="0 0 13 13" className="h-[13px] w-[13px]" fill="none" stroke="currentColor"><path d="M0 6.500 H13" /></svg>
          <svg viewBox="0 0 13 13" className="h-[13px] w-[13px]" fill="none" stroke="currentColor"><path d="M.5 3.500 H9.500 V12.500 H.5 Z M3.500 3.500 V.5 H12.500 V9.500 H9.500" strokeWidth="1.300" /></svg>
          <svg viewBox="0 0 13 13" className="h-[13px] w-[13px]" fill="none" stroke="currentColor"><path d="M.5 .5 L12.500 12.500 M12.500 .5 L.5 12.500" strokeWidth="1.300" /></svg>
        </span>
      </header>

      {/* menu bar */}
      <nav className="flex h-[26px] shrink-0 items-center border-t border-[#e9e9e9] bg-white pb-[3px] pl-[9px] font-['Noto_Sans',sans-serif] text-[16px] leading-[22px]">
        <svg viewBox="0 0 20 20" className="mr-[9px] h-[20px] w-[19px]">
          <path d="M3 0 H13 L18 5 V13 H3 Z" fill="#3f6080" />
          <path d="M6 1 V7 M3 4 H9" stroke="#fff" strokeWidth="1.200" />
          <path d="M0 13 Q4 8 8 11 Q14 12 19 9 V20 H0 Z" fill="#f0b81e" />
          <path d="M0 13 Q5 9 9 12 L0 20 Z" fill="#fbe08b" />
        </svg>
        {menu.map(([t, c]) => <Fit key={t} className={c}>{t}</Fit>)}
        <span className="ml-auto flex items-center gap-[13px] pr-[7px] pt-[2px] text-[#5c6f86]">
          <svg viewBox="0 0 11 11" className="h-[11px] w-[11px]" fill="none" stroke="currentColor" strokeWidth="2"><path d="M2 9.500 H9" /></svg>
          <svg viewBox="0 0 11 11" className="h-[11px] w-[11px]" fill="none" stroke="currentColor" strokeWidth="1.300"><path d="M1 4.500 H7 V10 H1 Z M4 4 V1 H10 V7 H7 M4 1.800 H10 M1 5.500 H7" /></svg>
          <svg viewBox="0 0 11 11" className="h-[11px] w-[11px]" fill="none" stroke="currentColor" strokeWidth="2"><path d="M1.500 1.500 L9.500 9.500 M9.500 1.500 L1.500 9.500" /></svg>
        </span>
      </nav>

      {/* standard and styles toolbars */}
      <div className="flex h-[34px] shrink-0 border-b border-[#b0b0b0]">
        <Bar className="w-[818px] pt-[1px]">
          <Grip />
          <C>{i.newf}</C><C>{i.open}</C><C>{i.save}</C><VSep />
          <C>{i.print}</C><C>{i.preview}</C><C>{i.publish}</C><C>{i.dwf}</C><VSep />
          <C>{i.cut}</C><C>{i.copy}</C><C>{i.paste}</C><C>{i.brush}</C><C>{i.match}</C><VSep />
          <C>{i.undo}</C>
          <span className="flex w-[18px] justify-center"><Tri c="#1b1b80" /></span>
          <C>{i.redo}</C>
          <span className="flex w-[15px] justify-center"><Tri c="#bcbcc4" /></span>
          <VSep />
          <C>{i.pan}</C><C>{i.zoomrt}</C><C>{i.zoomwin}</C><C>{i.zoomprev}</C><VSep />
          <C>{i.props}</C><C>{i.dcenter}</C><C>{i.palettes}</C><C>{i.sheetset}</C><C>{i.markup}</C><C>{i.calc}</C><VSep />
          <C>{i.help}</C>
        </Bar>
        <Bar className="w-[498px] pt-[1px]">
          <Grip />
          <span className="flex w-[31px] justify-center">{i.tstyle}</span>
          <Combo className="w-[125px] pl-[4px]"><Fit className="w-[54px]">Standard</Fit></Combo>
          <VSep />
          <span className="flex w-[28px] justify-center">{i.dstyle}</span>
          <Combo className="w-[125px] pl-[4px]"><Fit className="w-[54px]">Standard</Fit></Combo>
          <VSep />
          <span className="flex w-[29px] justify-center">{i.tabstyle}</span>
          <Combo className="w-[124px] pl-[4px]"><Fit className="w-[54px]">Standard</Fit></Combo>
        </Bar>
      </div>

      {/* workspaces, layers and properties toolbars */}
      <div className="flex h-[36px] shrink-0 border-b border-[#666] pb-px">
        <Bar className="w-[297px] pt-[2px]">
          <Grip />
          <Combo className="ml-[1px] w-[219px] pl-[9px]"><Fit className="w-[101px]">AutoCAD Classic</Fit></Combo>
          <C>{i.gear}</C><C>{i.home}</C>
        </Bar>
        <Bar className="w-[484px] pt-[2px]">
          <Grip />
          <span className="flex w-[33px] justify-center">{i.layers}</span>
          <Combo className="w-[374px] pl-[2px]">
            <span className="flex w-[85px] items-center gap-px">{i.bulb}{i.sun}{i.freeze}{i.lock}</span>
            <span className="ml-[-1px] h-[13px] w-[12px] shrink-0 border border-[#123] bg-[#00cc33]" />
            <Fit className="ml-[6px] w-[27px]">Wall</Fit>
          </Combo>
          <C>{i.laymake}</C><C>{i.layprev}</C>
        </Bar>
        <Bar className="w-[739px] pt-[2px]">
          <span className="w-[2px]" />
          <Grip />
          <Combo className="ml-px w-[187px] pl-[5px]">
            <span className="h-[13px] w-[12px] shrink-0 border border-black bg-[#ff00ff]" />
            <Fit className="ml-[6px] w-[52px]">Magenta</Fit>
          </Combo>
          <VSep />
          <Combo className="w-[200px] pl-[4px]"><span className="mr-[6px] h-[1.5px] w-[75px] bg-black" /><Fit className="w-[48px]">ByLayer</Fit></Combo>
          <span className="w-[7px]"><VSep /></span>
          <Combo className="w-[156px] pl-[5px]"><span className="mr-[6px] h-[1.5px] w-[43px] bg-black" /><Fit className="w-[48px]">ByLayer</Fit></Combo>
          <VSep />
          <Combo off className="w-[150px] pl-[10px]"><Fit className="w-[45px]">ByColor</Fit></Combo>
        </Bar>
      </div>

      {/* tool palettes and drawing window */}
      <main className="flex h-[812px] shrink-0">
        <aside className="flex w-[66px] shrink-0 items-start">
          <div className="flex h-[542px] w-[31px] flex-col items-center border-b border-r border-[#a0a0a0] pt-[2px]">
            <HGrip />
            <div className="mt-[3px] flex flex-col">
              {draw.map((d, n) => <span key={n} className="flex h-[27.450px] items-center">{d}</span>)}
            </div>
          </div>
          <div className="ml-px flex h-[552px] w-[31px] flex-col items-center border-b border-l border-r border-[#a0a0a0] border-l-white pt-[2px]">
            <HGrip />
            <div className="mt-[3px] flex flex-col items-center">
              {dims.map((d, n) => d === Sep
                ? <span key={n} className="flex h-[7.800px] items-center"><span className="h-[2px] w-[24px] border-b border-white bg-[#9b9b9b]" /></span>
                : <span key={n} className="flex h-[27.450px] items-center">{d}</span>)}
            </div>
          </div>
        </aside>
        <section className="flex w-[1819px] shrink-0 flex-col border-l border-[#555]">
          <div className="h-[791px] shrink-0 bg-black"><Drawing /></div>
          <div className="flex h-[21px] items-start border-b border-white">
            <Nav d={<path d="M1 0 H2.500 V12 H1 Z M10 0 V12 L3.500 6 Z" />} />
            <Nav d={<path d="M9 0 V12 L2 6 Z" />} />
            <Nav d={<path d="M3 0 V12 L10 6 Z" />} />
            <Nav d={<path d="M2 0 V12 L9 6 Z M10.500 0 H12 V12 H10.500 Z" />} />
            <Tab on className="ml-[5px] w-[56px]" w="w-[36px]">Model</Tab>
            <Tab className="-ml-[2px] w-[63px]" w="w-[46px]">Layout1</Tab>
            <Tab className="-ml-px w-[65px]" w="w-[47px]">Layout2</Tab>
          </div>
        </section>
        <aside className="flex w-[35px] shrink-0 flex-col border-l border-white pl-[3px] pr-px">
          <div className="flex h-[486px] flex-col items-center border-b border-l border-r border-[#a0a0a0] border-l-white pt-[2px]">
            <HGrip />
            <div className="mt-[3px] flex flex-col">
              {modify.map((d, n) => <span key={n} className="flex h-[27.450px] items-center">{d}</span>)}
            </div>
          </div>
          <div className="mt-[2px] flex h-[132px] flex-col items-center border-b border-l border-r border-[#a0a0a0] border-l-white pt-[3px]">
            <HGrip />
            <div className="mt-[4px] flex flex-col">
              {order.map((d, n) => <span key={n} className="flex h-[27.600px] items-center">{d}</span>)}
            </div>
          </div>
        </aside>
      </main>

      {/* command window */}
      <section className="flex h-[77px] shrink-0 flex-col border-b border-[#9a9a9a] pt-px">
        <div className="mt-[4px] h-[3px] shrink-0 border-b-2 border-t border-[#707070] border-t-white" />
        <div className="mt-[11px] flex h-[55px]">
          <span className="flex h-[51px] w-[20px] shrink-0 gap-[2px] pl-[8px]">
            <span className="w-[4px] border-b border-r border-[#9a9a9a] bg-white" />
            <span className="w-[4px] border-b border-r border-[#9a9a9a] bg-white" />
          </span>
          <div className="flex w-[1890px] flex-col border-l-2 border-t-2 border-[#707070] font-['Liberation_Mono',monospace] text-[17px]">
            <div className="flex h-[29px] justify-between border-b border-[#a0a0a0] bg-white">
              <Fit className="w-[440px] leading-[23px]">Command: _pasteclip Specify insertion point:</Fit>
              <span className="flex w-[20px] flex-col items-center justify-around bg-[#efefef] py-[3px]">
                <svg viewBox="0 0 10 6" className="h-[7px] w-[10px]" fill="none"><path d="M1 5.500 L5 1.500 L9 5.500" stroke="#555" strokeWidth="2" /></svg>
                <svg viewBox="0 0 10 6" className="h-[7px] w-[10px]" fill="none"><path d="M1 .5 L5 4.500 L9 .5" stroke="#555" strokeWidth="2" /></svg>
              </span>
            </div>
            <div className="flex h-[23px]">
              <div className="w-[1780px] bg-white"><Fit className="w-[80px] leading-[27px]">Command:</Fit></div>
              <div className="flex w-[86px] items-center pl-[10px]">
                <svg viewBox="0 0 6 10" className="h-[10px] w-[8px]" fill="none"><path d="M5.500 1 L1 5 L5.500 9" stroke="#444" strokeWidth="1.800" /></svg>
                <span className="ml-[6px] h-[20px] w-[21px] bg-[#cdcdcd]" />
                <svg viewBox="0 0 6 10" className="ml-[26px] h-[10px] w-[8px]" fill="none"><path d="M.5 1 L5 5 L.5 9" stroke="#444" strokeWidth="1.800" /></svg>
              </div>
            </div>
          </div>
        </div>
      </section>

      {/* status bar */}
      <section className="flex h-[28px] shrink-0 items-start border-t border-white pl-[6px] pt-[4px] text-[17.500px] leading-[22px]">
        <span className="mr-[4px] h-[22px] w-[222px] border border-b-white border-l-[#9a9a9a] border-r-[#b5b5b5] border-t-[#9a9a9a] pl-[2px]">
          <Fit className="w-[176px]">{"44'-5.15\",  -4'-3.39\"  , 0'-0.00\""}</Fit>
        </span>
        {status.map(([t, on, c, w]) => (
          <span key={t} className={"flex h-[22px] shrink-0 justify-center border-2 " + (on ? "border-b-white border-l-[#333] border-r-white border-t-[#333] pl-[2px] " : "border-b-[#b0b0b0] border-l-white border-r-[#a8a8a8] border-t-white ") + c}>
            <Fit className={w + (on ? " leading-[22px]" : " leading-[20px]")}>{t}</Fit>
          </span>
        ))}
        <span className="ml-auto mr-[5px] flex items-start">
          <span className="flex h-[23px] w-[105px] items-center gap-[5px] border-l border-t border-[#777] bg-[#f4f4f4] pl-[3px]">
            <Ico><path d="M2 2 Q1 12 12 11 L4 1 Z" fill="#a9bfe0" stroke="#4b679c" /><path d="M8 5 L14 1 M3 17 H10 L7 10 Z" stroke="#4b679c" fill="#6b86b7" /><path d="M12.500 7 L19.500 19 H5.500 Z" fill="#ffdf1c" stroke="#a98a16" /><path d="M12.500 11 V15 M12.500 16 V18" stroke="#000" strokeWidth="1.800" /></Ico>
            <Ico><path d="M11 8 V5 Q12 1 15 1 Q19 1 19 6 V8" stroke="#a3912a" strokeWidth="2" /><rect x="0" y="7" width="14" height="12" rx="1" fill="#3d3505" /><path d="M1 9 h12 M1 12 h12 M1 15 h12 M1 18 h12" stroke="#e6d31f" strokeWidth="1.600" /></Ico>
            <Ico><path d="M1 1 H11 L15 5 V17 H1 Z" fill="#44688f" /><path d="M5 4 V15 M9 6 V12 M2 6 h6" stroke="#dce8f3" strokeWidth="1.500" /><circle cx="14" cy="14" r="5.500" fill="#2ea83a" /><path d="M11 14 L13.500 16.500 L17 11.500" stroke="#fff" strokeWidth="2" /></Ico>
            <Ico><path d="M5 9 L13 3 L20 10 L11 18 Z" fill="#b7d3e8" stroke="#688aa8" /><circle cx="6" cy="5" r="4" fill="#26282c" /><path d="M0 0 L4 4 M8 7 L11 10" stroke="#26282c" strokeWidth="2" /></Ico>
          </span>
          <svg viewBox="0 0 8 5" className="ml-[7px] mt-[14px] h-[5px] w-[9px]"><path d="M0 0 H8 L4 5 Z" fill="#000" /></svg>
          <span className="ml-[11px] flex h-[20px] w-[20px] items-center justify-center border-2 border-[#2f5f92] bg-[#6f9dcb]">
            <span className="h-[13px] w-[13px] border border-[#386a9f] bg-[#bcd7ee]" />
          </span>
        </span>
      </section>

      {/* taskbar */}
      <footer className="flex h-[38px] shrink-0 bg-[#1f1f24] text-white">
        {tasks.map(([icon, line, on], n) => (
          <span key={n} className={"flex h-[38px] w-[46.100px] shrink-0 flex-col items-center justify-between pt-[9px] " + (on ? "bg-[#4a4a4f]" : "")}>
            {icon}
            {line && <span className={"h-[3px] bg-[#aaa7a7] " + line} />}
          </span>
        ))}
        <div className="ml-auto flex items-center font-['Noto_Sans',sans-serif]">
          <svg viewBox="0 0 28 24" className="mr-[11px] h-[24px] w-[28px]">
            <path d="M15 0 Q26 6 23 18 L4 19 Q0 18 2 15 Q15 14 15 0" fill="#fbc91b" />
            <path d="M1 22 Q1 19 6 19 Q8 16 12 18 Q14 13 19 15 Q23 16 23 18 Q28 19 27 21 Q15 24 1 22" fill="#dcc9b8" />
          </svg>
          <Fit className="w-[37px] text-[18px] leading-[40px]">32°C</Fit>
          <Fit className="ml-[11px] w-[40px] text-[18px] leading-[40px]">Haze</Fit>
          <svg viewBox="0 0 16 10" className="ml-[13px] h-[10px] w-[16px]" fill="none" stroke="#fff" strokeWidth="1.400"><path d="M1 9 L8 1.500 L15 9" /></svg>
          <svg viewBox="0 0 16 20" className="ml-[15px] h-[20px] w-[16px]" fill="none" stroke="#fff" strokeWidth="1.200"><rect x="1" y="5.500" width="9" height="9" rx="2" /><path d="M10 9 L14.500 6.500 V13.500 L10 11 M3 3.500 Q7 0 12 3 M3 16.500 Q7 20 12 17" /></svg>
          <svg viewBox="0 0 20 14" className="ml-[11px] h-[14px] w-[20px]" fill="none" stroke="#fff" strokeWidth="1.200"><path d="M5.500 3.500 H18 V12 H4 V8 M18.800 6 V10 M2 0 V3 M5 0 V3 M1 3 H6 V5 Q3.500 8 1 5 Z M3.500 6 V10" /><rect x="7" y="5" width="9.500" height="5.500" fill="#fff" /></svg>
          <svg viewBox="0 0 16 16" className="ml-[12px] h-[16px] w-[16px]" fill="none" stroke="#fff" strokeWidth="1.200"><path d="M1 14 Q1 1 15 1 M4.500 15 Q4 4.500 15 4.500 M8 15 Q8 8.500 15 8.500" /><circle cx="13.500" cy="13.500" r="1.800" fill="#fff" stroke="none" /></svg>
          <svg viewBox="0 0 20 18" className="ml-[12px] h-[18px] w-[20px]" fill="none" stroke="#fff" strokeWidth="1.200"><path d="M1 6 H4 L8 2 V16 L4 12 H1 Z M10.500 6.500 Q12.500 9 10.500 11.500 M13.500 4 Q17 9 13.500 14" /><path d="M16.500 2 Q21 9 16.500 16" stroke="#888" /></svg>
          <Fit className="ml-[17px] w-[52px] text-[16px] leading-[38px]">9:04 PM</Fit>
          <svg viewBox="0 0 21 20" className="ml-[28px] h-[20px] w-[21px]" fill="none" stroke="#fff" strokeWidth="1.400"><path d="M1 1 H20 V16 H13 L10.500 19 L8 16 H1 Z" /></svg>
          <span className="ml-[25px] mr-[5px] h-[38px] w-px bg-[#77777b]" />
        </div>
      </footer>
    </div>
  );
}
